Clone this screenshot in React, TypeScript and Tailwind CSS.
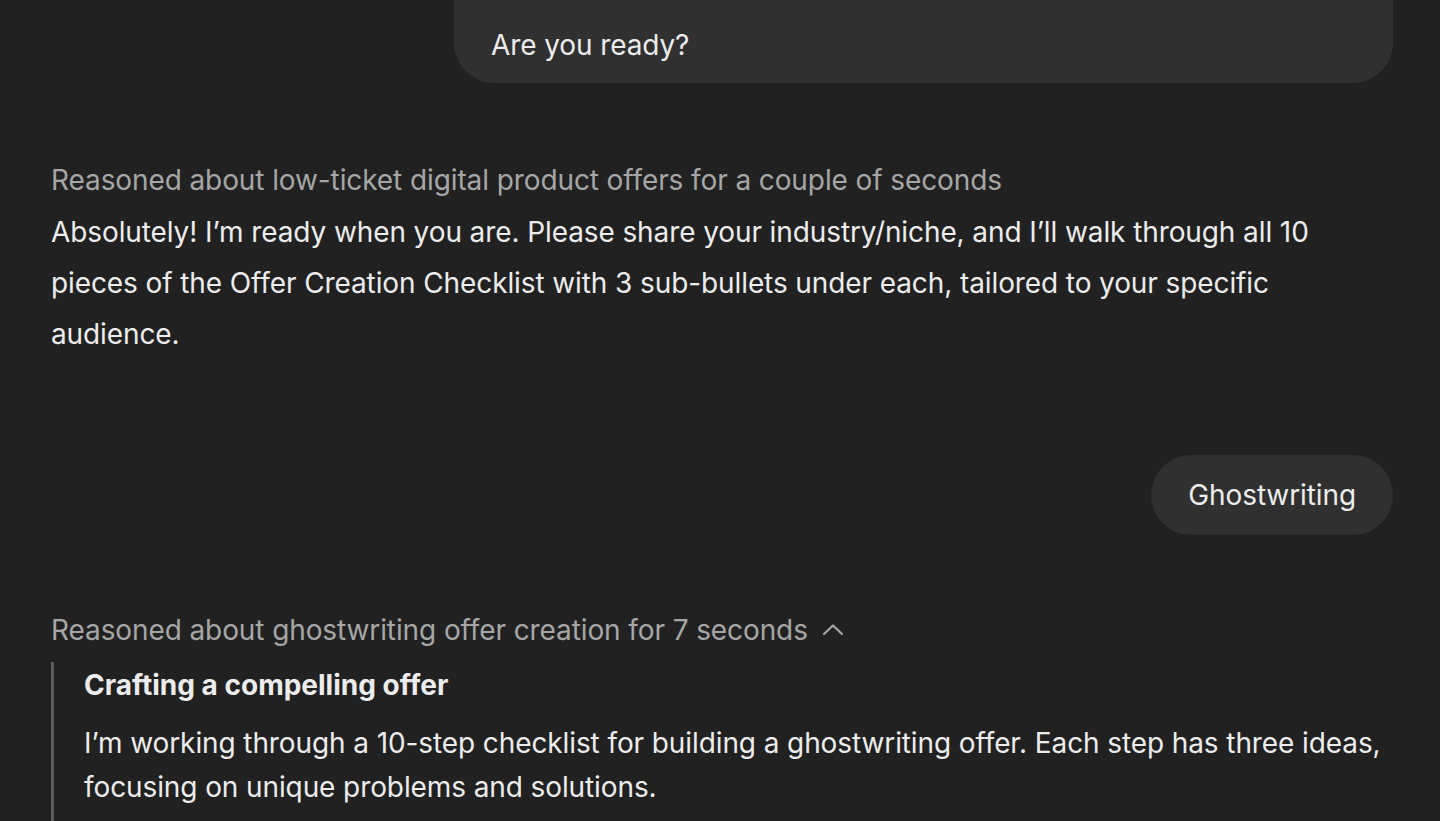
import React from "react";

export default function App() {
  return (
    <div
      className="min-h-screen w-full bg-[#212121] text-[#ececec] overflow-hidden tracking-[-0.1px]"
      style={{ fontFamily: "Inter, 'Noto Sans', sans-serif" }}
    >
      <div className="pl-[51px] pr-[47px]">
        {/* top user bubble */}
        <div className="flex justify-end">
          <div className="w-[939px] bg-[#303030] rounded-b-[40px] pl-[37px] pr-[37px] pt-[28px] pb-[21px]">
            <p className="text-[28px] leading-[34px]">Are you ready?</p>
          </div>
        </div>

        {/* assistant reply 1 */}
        <div className="mt-[80px]">
          <div className="text-[28px] leading-[34px] text-[#a6a6a6]">
            Reasoned about low-ticket digital product offers for a couple of seconds
          </div>
          <p className="mt-[10px] text-[28px] leading-[51px] max-w-[1300px]">
            Absolutely! I’m ready when you are. Please share your industry/niche, and I’ll walk through all 10 pieces of the Offer Creation Checklist with 3 sub-bullets under each, tailored to your specific audience.
          </p>
        </div>

        {/* user bubble 2 */}
        <div className="mt-[95px] flex justify-end">
          <div className="h-[80px] bg-[#303030] rounded-full px-[37px] flex items-center">
            <span className="text-[28px]">Ghostwriting</span>
          </div>
        </div>

        {/* assistant reply 2 */}
        <div className="mt-[78px]">
          <div className="flex items-center gap-[14px] text-[28px] leading-[34px] text-[#a6a6a6]">
            <span>Reasoned about ghostwriting offer creation for 7 seconds</span>
            <svg width="22" height="14" viewBox="0 0 22 14" fill="none" stroke="#a6a6a6" strokeWidth="2.2" strokeLinecap="round" strokeLinejoin="round">
              <path d="M2 11 L11 2.5 L20 11" />
            </svg>
          </div>
          <div className="mt-[15px] border-l-[3px] border-[#5c5c5c] pl-[30px] pt-[6px] pb-[40px]">
            <div className="text-[28px] leading-[34px] font-bold tracking-normal">Crafting a compelling offer</div>
            <p className="mt-[19px] text-[28px] leading-[44px]">
              I’m working through a 10-step checklist for building a ghostwriting offer. Each step has three ideas, focusing on unique problems and solutions.
            </p>
          </div>
        </div>
      </div>
    </div>
  );
}
